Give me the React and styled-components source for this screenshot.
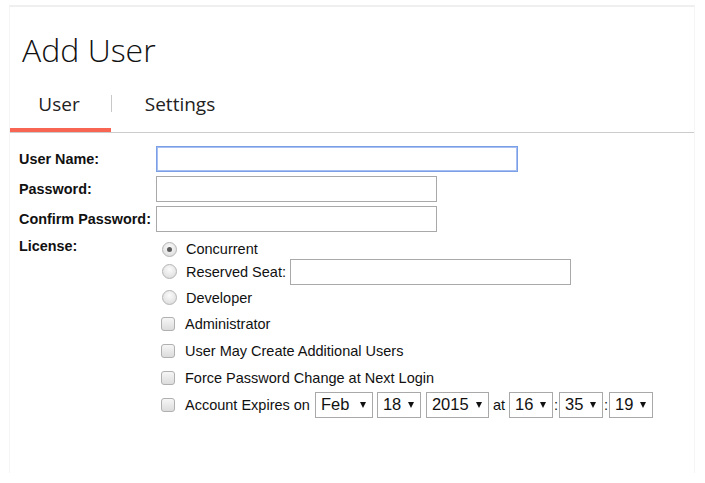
import React from "react";
import styled, { createGlobalStyle } from "styled-components";

const GlobalStyle = createGlobalStyle`
  html, body {
    margin: 0;
    padding: 0;
    background: #ffffff;
  }
  body {
    font-family: "Liberation Sans", Arial, sans-serif;
    color: #111;
  }
`;

const Card = styled.div`
  margin: 5px 10px 0 9px;
  height: 466px;
  border: 1px solid #f5f5f5;
  border-top: 2px solid #efefef;
  border-bottom: none;
  background: #fff;
`;

const Title = styled.h1`
  margin: 0;
  padding: 23px 0 0 12px;
  font-family: "Open Sans", "Noto Sans", sans-serif;
  font-weight: 300;
  font-size: 32px;
  line-height: 40px;
  color: #111;
`;

const Tabs = styled.div`
  display: flex;
  align-items: stretch;
  margin-top: 20px;
  border-bottom: 1px solid #cccccc;
`;

const Tab = styled.div`
  display: flex;
  align-items: center;
  justify-content: center;
  box-sizing: border-box;
  width: ${(p) => p.$width}px;
  height: 42px;
  padding-bottom: 10px;
  padding-right: ${(p) => (p.$active ? 3 : 0)}px;
  font-family: "Open Sans", "Noto Sans", sans-serif;
  font-size: 19px;
  color: #222;
  border-bottom: 4px solid ${(p) => (p.$active ? "#f96553" : "transparent")};
`;

const Divider = styled.span`
  align-self: flex-start;
  width: 1px;
  height: 17px;
  margin-top: 5px;
  background: #c8c8c8;
`;

const Form = styled.div`
  display: grid;
  grid-template-columns: 137px 1fr;
  row-gap: 4px;
  padding: 13px 0 0 9px;
`;

const Label = styled.label`
  font-weight: bold;
  font-size: 14.4px;
  line-height: 26px;
  color: #111;
  white-space: nowrap;
  align-self: ${(p) => (p.$top ? "start" : "center")};
  margin-top: ${(p) => (p.$top ? "-3px" : "0")};
`;

const TextInput = styled.input`
  box-sizing: border-box;
  width: ${(p) => p.$width}px;
  height: 26px;
  margin: 0;
  border: 1px solid ${(p) => (p.$focus ? "#7b9fe6" : "#a9a9a9")};
  box-shadow: ${(p) => (p.$focus ? "0 0 0 1px #a7bff0 inset" : "none")};
  outline: none;
  background: #fff;
  font-family: inherit;
  font-size: 14px;
`;

const Options = styled.div`
  display: flex;
  flex-direction: column;
  padding: 4px 0 0 6px;
`;

const Option = styled.div`
  display: flex;
  align-items: center;
  height: ${(p) => p.$h || 27}px;
  font-size: 14.5px;
  color: #111;
  white-space: nowrap;
`;

const Radio = styled.span`
  box-sizing: border-box;
  width: 15px;
  height: 15px;
  margin-right: 9px;
  border-radius: 50%;
  border: 1px solid #b4b4b4;
  background: radial-gradient(circle at 50% 35%, #fbfbfb 0%, #e6e6e6 60%, #d4d4d4 100%);
  display: flex;
  align-items: center;
  justify-content: center;
  &::after {
    content: "";
    width: 5px;
    height: 5px;
    border-radius: 50%;
    background: ${(p) => (p.$checked ? "#5a5a5a" : "transparent")};
  }
`;

const Check = styled.span`
  box-sizing: border-box;
  width: 14px;
  height: 14px;
  margin: 0 10px 0 -1px;
  border-radius: 3px;
  border: 1px solid #b0b0b0;
  background: linear-gradient(#f6f6f6, #dcdcdc);
`;

const SeatInput = styled(TextInput)`
  margin-left: 4px;
`;

const Select = styled.span`
  box-sizing: border-box;
  display: inline-flex;
  align-items: center;
  justify-content: space-between;
  width: ${(p) => p.$width}px;
  height: 26px;
  margin: 0 ${(p) => p.$mr ?? 4}px 0 ${(p) => p.$ml ?? 0}px;
  padding: 0 6px 0 5px;
  border: 1px solid #a9a9a9;
  background: #fff;
  font-size: 16.5px;
  color: #111;
  &::after {
    content: "";
    border-left: 3px solid transparent;
    border-right: 3px solid transparent;
    border-top: 6px solid #111;
    margin-top: 1px;
  }
`;

const Sep = styled.span`
  margin: 0 ${(p) => p.$mr ?? 1}px 0 ${(p) => p.$ml ?? 1}px;
  font-size: 14.5px;
  color: #111;
`;

const App = () => {
  return (
    <>
      <GlobalStyle />
      <Card>
        <Title>Add User</Title>
        <Tabs>
          <Tab $width={101} $active>User</Tab>
          <Divider />
          <Tab $width={136}>Settings</Tab>
        </Tabs>
        <Form>
          <Label>User Name:</Label>
          <TextInput $width={362} $focus />
          <Label>Password:</Label>
          <TextInput $width={281} />
          <Label>Confirm Password:</Label>
          <TextInput $width={281} />
          <Label $top>License:</Label>
          <Options>
            <Option $h={18}>
              <Radio $checked />
              Concurrent
            </Option>
            <Option $h={27}>
              <Radio />
              Reserved Seat:
              <SeatInput $width={281} />
            </Option>
            <Option $h={25}>
              <Radio />
              Developer
            </Option>
            <Option>
              <Check />
              Administrator
            </Option>
            <Option>
              <Check />
              User May Create Additional Users
            </Option>
            <Option>
              <Check />
              Force Password Change at Next Login
            </Option>
            <Option>
              <Check />
              Account Expires on
              <Select $width={58} $ml={5}>Feb</Select>
              <Select $width={44} $mr={5}>18</Select>
              <Select $width={63} $mr={0}>2015</Select>
              <Sep $ml={4} $mr={4}>at</Sep>
              <Select $width={44} $mr={0}>16</Select>
              <Sep>:</Sep>
              <Select $width={44} $mr={0}>35</Select>
              <Sep>:</Sep>
              <Select $width={44} $mr={0}>19</Select>
            </Option>
          </Options>
        </Form>
      </Card>
    </>
  );
};

export default App;
